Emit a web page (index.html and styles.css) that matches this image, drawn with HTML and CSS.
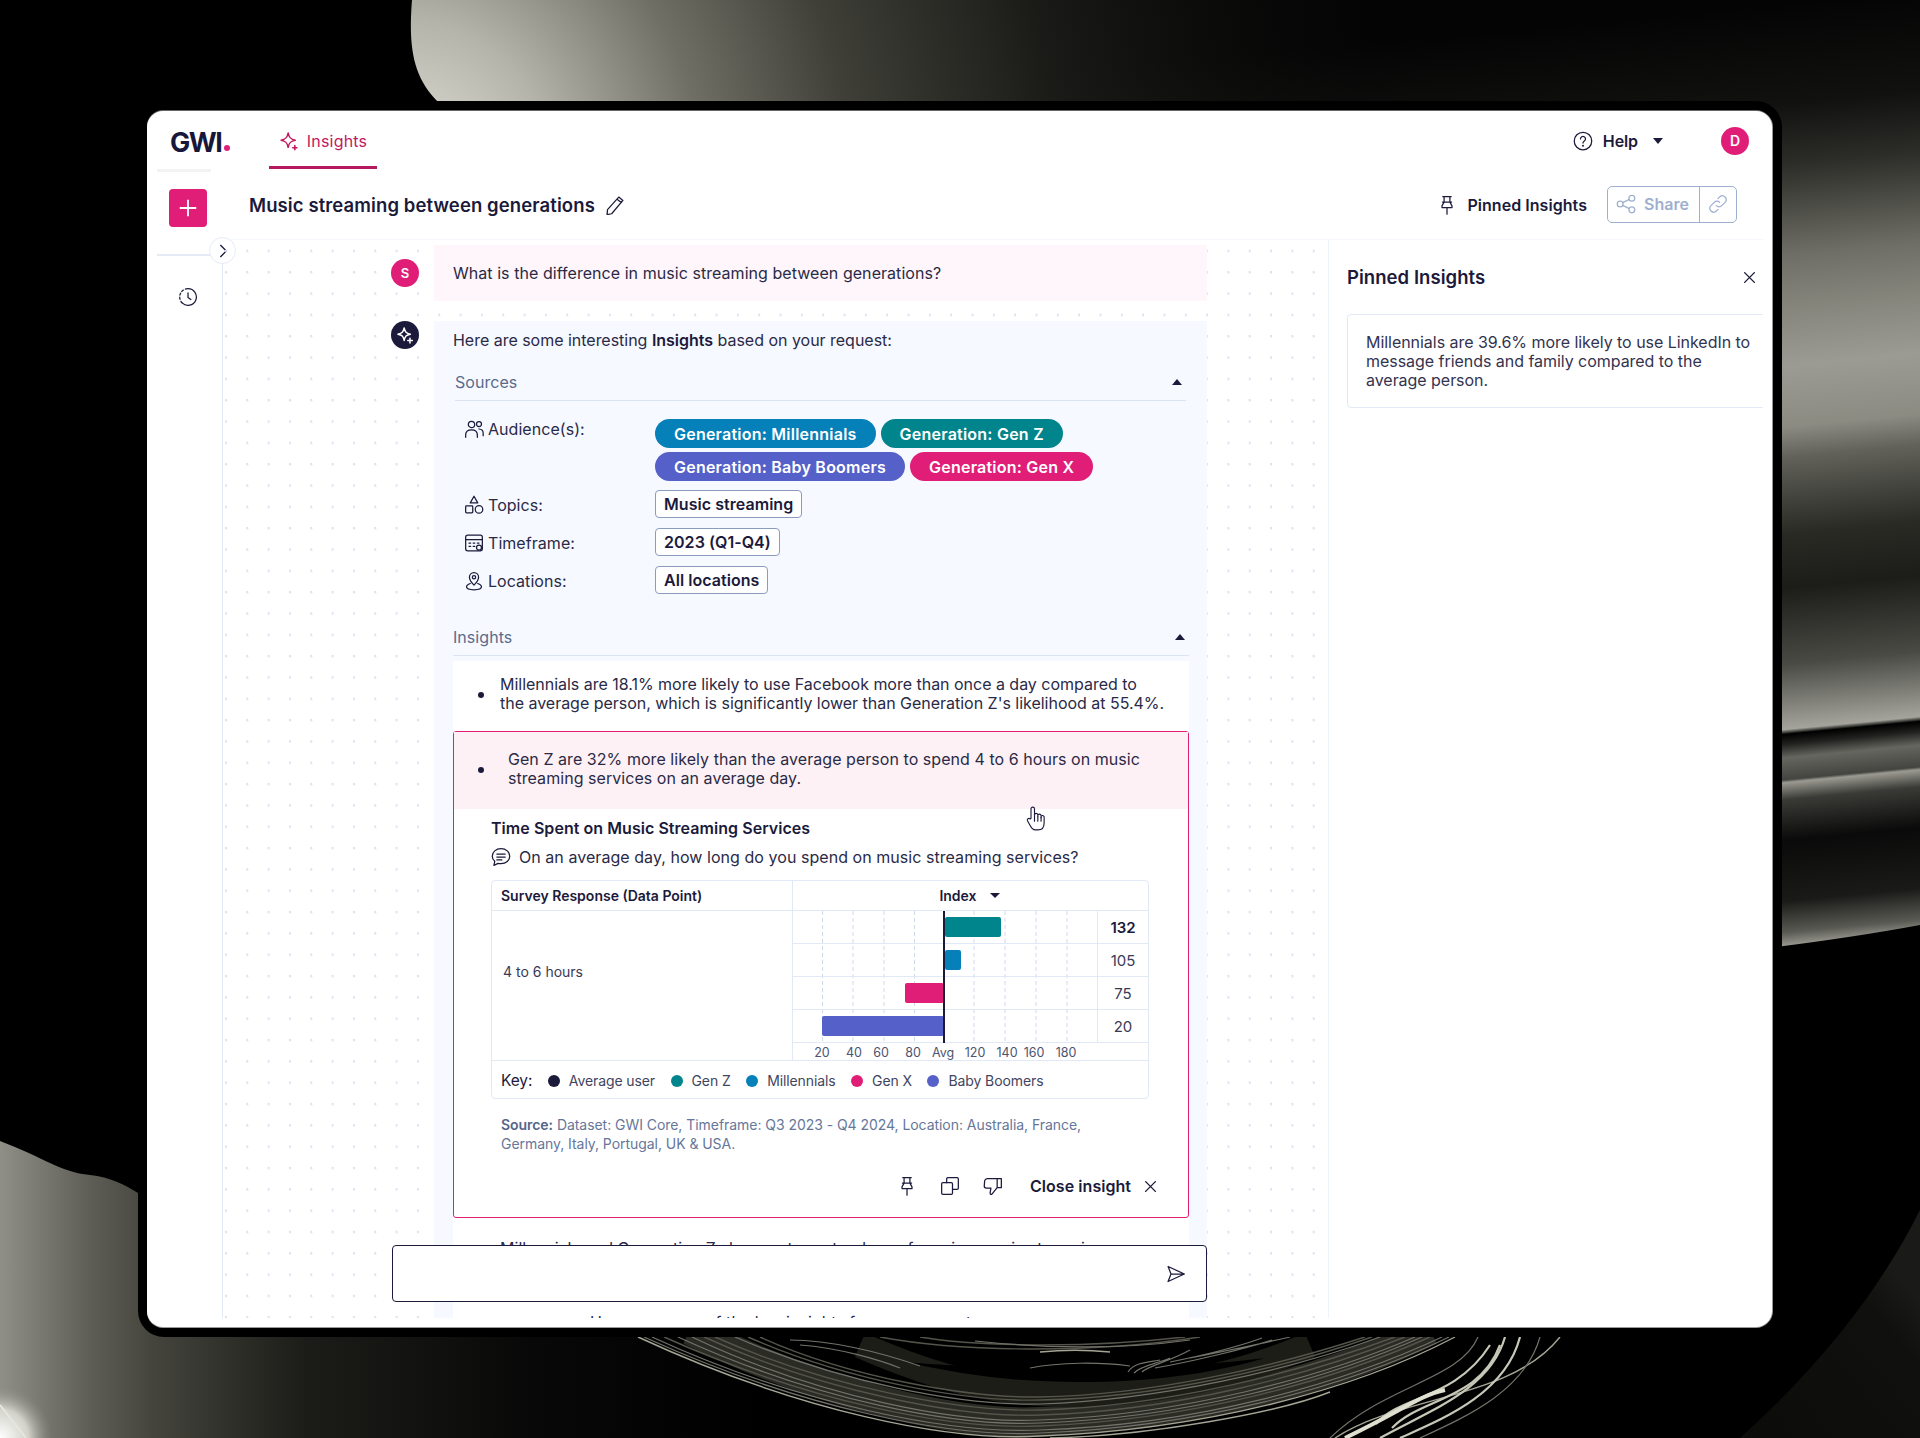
FILE: index.html
```html
<!DOCTYPE html>
<html lang="en">
<head>
<meta charset="utf-8">
<title>GWI Insights</title>
<link rel="stylesheet" href="styles.css">
</head>
<body>
<svg class="backdrop" viewBox="0 0 1920 1438" aria-hidden="true">
  <defs>
    <linearGradient id="rightBand" gradientUnits="userSpaceOnUse" x1="1815" y1="0" x2="1905" y2="940">
      <stop offset="0" stop-color="#040404"/><stop offset=".106" stop-color="#111110"/><stop offset=".17" stop-color="#2c2c28"/>
      <stop offset=".213" stop-color="#4a4a44"/><stop offset=".266" stop-color="#6e6e66"/><stop offset=".319" stop-color="#84847b"/>
      <stop offset=".383" stop-color="#9b9b93"/><stop offset=".447" stop-color="#8b8b82"/><stop offset=".479" stop-color="#62625b"/>
      <stop offset=".52" stop-color="#45453f"/><stop offset=".56" stop-color="#2a2a25"/><stop offset=".617" stop-color="#1c1c18"/>
      <stop offset=".697" stop-color="#4a4a45"/><stop offset=".766" stop-color="#a4a49c"/><stop offset=".771" stop-color="#000"/>
      <stop offset=".782" stop-color="#222220"/><stop offset=".796" stop-color="#666660"/><stop offset=".819" stop-color="#444440"/>
      <stop offset=".822" stop-color="#9a9a92"/><stop offset=".84" stop-color="#3a3a36"/><stop offset=".883" stop-color="#0a0a0a"/>
      <stop offset=".947" stop-color="#1a1a18"/><stop offset=".98" stop-color="#5a5a54"/><stop offset="1" stop-color="#b0b0a8"/>
    </linearGradient>
    <radialGradient id="topBlob" gradientUnits="userSpaceOnUse" cx="400" cy="170" r="1000">
      <stop offset="0" stop-color="#e4e4dc"/><stop offset=".15" stop-color="#b4b4aa"/><stop offset=".3" stop-color="#6f6f65"/>
      <stop offset=".45" stop-color="#3f3f38"/><stop offset=".65" stop-color="#1b1b18"/><stop offset="1" stop-color="#0a0a0a" stop-opacity="0"/>
    </radialGradient>
    <linearGradient id="leftFade" gradientUnits="userSpaceOnUse" x1="0" y1="0" x2="760" y2="0">
      <stop offset="0" stop-color="#8f8f87"/><stop offset=".12" stop-color="#5d5d55"/><stop offset=".2" stop-color="#45453e"/>
      <stop offset=".4" stop-color="#1c1c18"/><stop offset=".7" stop-color="#080808"/><stop offset="1" stop-color="#000"/>
    </linearGradient>
    <radialGradient id="leftGlow" gradientUnits="userSpaceOnUse" cx="0" cy="1438" r="52">
      <stop offset="0" stop-color="#fff"/><stop offset=".55" stop-color="#e0e0d8" stop-opacity=".85"/><stop offset="1" stop-color="#8f8f87" stop-opacity="0"/>
    </radialGradient>
    <linearGradient id="cornerFade" gradientUnits="userSpaceOnUse" x1="1760" y1="1438" x2="1920" y2="1300">
      <stop offset="0" stop-color="#0c0c0a"/><stop offset=".8" stop-color="#10100e"/><stop offset="1" stop-color="#1a1a18"/>
    </linearGradient>
  </defs>
  <rect class="bg-black" width="1920" height="1438"/>
  <path fill="url(#rightBand)" d="M412 0C408 50 414 78 438 102H1760V949Q1850 938 1920 925V0Z"/>
  <path fill="url(#topBlob)" d="M412 0C408 50 414 78 438 102H1782V0Z"/>
  <path fill="url(#leftFade)" d="M0 1141C45 1158 60 1172 90 1175C110 1177 125 1185 138 1193V1300H900V1438H0Z"/>
  <path fill="url(#leftGlow)" d="M0 1380H60V1438H0Z"/>
  <path class="s-w" d="M0 1405L26 1438"/>
  <path fill="url(#cornerFade)" d="M1740 1438Q1860 1330 1920 1210V1438Z"/>

  <path class="s-band" d="M690 1330C820 1395 960 1426 1040 1422C1180 1417 1320 1385 1430 1330"/>
  <path class="s-band2" d="M860 1345C940 1380 1000 1395 1080 1394C1160 1392 1240 1375 1310 1345"/>
  <path class="s-crescent" d="M905 1362C960 1374 1010 1382 1080 1382C1150 1382 1210 1374 1265 1358C1200 1366 1140 1368 1080 1368C1010 1368 950 1366 905 1362Z"/>
  <path class="s-1" d="M638 1337C800 1412 950 1442 1040 1436C1200 1430 1350 1392 1455 1337"/>
  <path class="s-2" d="M644 1337C800 1408 950 1438 1040 1433C1197 1427 1345 1388 1449 1337"/>
  <path class="s-2" d="M652 1337C800 1405 950 1434 1040 1430C1195 1425 1340 1385 1442 1337"/>
  <path class="s-3" d="M664 1337C810 1402 950 1430 1040 1426C1190 1420 1330 1382 1430 1337"/>
  <path class="s-2" d="M678 1337C815 1400 955 1427 1040 1423C1185 1418 1325 1380 1422 1337"/>
  <path class="s-2" d="M692 1337C820 1398 960 1424 1040 1420C1180 1415 1320 1378 1415 1337"/>
  <path class="s-3" d="M704 1337C825 1392 960 1418 1040 1415C1175 1411 1310 1375 1405 1337"/>
  <path class="s-3" d="M715 1337C830 1388 960 1412 1040 1410C1170 1406 1300 1372 1395 1337"/>
  <path class="s-2" d="M735 1337C840 1382 960 1406 1040 1404C1160 1400 1290 1370 1380 1337"/>
  <path class="s-3" d="M748 1337C845 1380 965 1402 1040 1400C1155 1398 1280 1369 1372 1337"/>
  <path class="s-3" d="M760 1337C850 1378 970 1398 1040 1397C1150 1395 1270 1368 1365 1337"/>
  <path class="s-2" d="M800 1345C840 1348 880 1360 900 1368"/>
  <path class="s-2" d="M790 1340C830 1340 880 1352 920 1366"/>
  <path class="s-3" d="M880 1337C960 1352 1090 1354 1200 1337"/>
  <path class="s-3" d="M920 1337C980 1347 1090 1348 1185 1337"/>
  <path class="s-2" d="M975 1341C1040 1348 1120 1350 1190 1340"/>
  <path class="s-1" d="M1040 1352C1060 1350 1090 1350 1110 1352"/>
  <path class="s-2" d="M1030 1368C1060 1362 1100 1362 1130 1366"/>
  <path class="s-2" d="M1128 1372C1134 1362 1150 1362 1160 1360M1134 1373C1140 1366 1156 1364 1170 1358M1142 1372C1148 1366 1168 1362 1190 1350"/>
  <path class="s-2" d="M1155 1368C1190 1362 1240 1350 1272 1340M1170 1362C1200 1356 1240 1346 1262 1338M1190 1358C1220 1352 1260 1344 1290 1337"/>
  <path class="s-1" d="M1335 1438C1400 1395 1510 1400 1560 1337"/>
  <path class="s-l" d="M1380 1438C1430 1410 1490 1390 1505 1337"/>
  <path class="s-l" d="M1400 1438C1440 1420 1505 1395 1520 1337"/>
  <path class="s-l" d="M1376 1424C1400 1395 1455 1400 1490 1345M1392 1428C1420 1398 1480 1400 1500 1345"/>
  <path class="s-2" d="M1330 1438C1385 1385 1460 1380 1478 1337"/>
  <path class="s-2" d="M1420 1438C1470 1415 1525 1390 1540 1337"/>
  <path class="s-w2" d="M1345 1438C1400 1412 1420 1395 1445 1390"/>
  <path class="s-1" d="M1050 1438C1150 1436 1280 1412 1330 1392"/>
</svg>

<div class="frame">
  <div class="app">
    <header class="topbar">
      <div class="logo">GWI<span class="logo-dot"></span></div>
      <a class="tab">
        <svg class="ic-20 tab-ic" viewBox="0 0 24 24"><path class="st" d="M11 2.500C12 8 14 10 19.500 11 14 12 12 14 11 19.500 10 14 8 12 2.500 11 8 10 10 8 11 2.500Z"/><path class="st" d="M19 17.500v5M16.500 20h5"/></svg>
        <span>Insights</span>
      </a>
      <div class="top-right">
        <button class="help">
          <svg class="ic-20 dark" viewBox="0 0 24 24"><circle class="st" cx="12" cy="12" r="10.500"/><path class="st" d="M9 9.500a3 3 0 1 1 4.600 2.500c-1 .7-1.600 1.200-1.600 2.500"/><circle class="fl" cx="12" cy="17.700" r="1.200"/></svg>
          <span>Help</span>
          <i class="caret-down"></i>
        </button>
        <div class="avatar pink big">D</div>
      </div>
    </header>

    <div class="workspace">
      <aside class="sidebar">
        <button class="new-btn"><svg viewBox="0 0 24 24"><path d="M12 3v18M3 12h18"/></svg></button>
        <div class="side-rule"></div>
        <svg class="history" viewBox="0 0 24 24"><path class="st" d="M12 2a10 10 0 1 1-7 17.100"/><path class="st dash2" d="M5 19.100A10 10 0 0 1 12 2"/><path class="st" d="M12 7v5.500l3.500 2.500"/></svg>
        <button class="toggle"><svg viewBox="0 0 24 24"><path d="M8 3l9 9-9 9"/></svg></button>
      </aside>

      <main class="main">
        <div class="titlebar">
          <div class="title-left">
            <h1>Music streaming between generations</h1>
            <svg class="ic-20 dark" viewBox="0 0 24 24"><path class="st" d="M16.500 2.500l5 4L8 22.500l-5.500 1 .5-6z M14.500 5l5 4"/></svg>
          </div>
          <div class="title-right">
            <button class="pinned-btn">
              <svg class="ic-20 dark" viewBox="0 0 24 24"><path class="st" d="M7 2h10M8.500 2v6.500L6 13v2h12v-2l-2.500-4.500V2M6.500 8.500h11M12 15v8"/></svg>
              <span>Pinned Insights</span>
            </button>
            <div class="share-group">
              <span class="share-main">
                <svg class="ic-20" viewBox="0 0 24 24"><circle class="st" cx="5" cy="12" r="3.500"/><circle class="st" cx="19" cy="5" r="3.500"/><circle class="st" cx="19" cy="19" r="3.500"/><path class="st" d="M8 10.300L16 6.500M8 13.700l8 3.800"/></svg>
                Share
              </span>
              <span class="share-link">
                <svg class="ic-20" viewBox="0 0 24 24"><path class="st" d="M10 14a4.500 4.500 0 0 0 6.500 0l4-4A4.600 4.600 0 0 0 14 3.500l-2 2"/><path class="st" d="M14 10a4.500 4.500 0 0 0-6.500 0l-4 4a4.600 4.600 0 0 0 6.500 6.500l2-2"/></svg>
              </span>
            </div>
          </div>
        </div>

        <div class="panes">
          <section class="chat">
            <div class="msg user-msg">
              <div class="avatar pink">S</div>
              <div class="bubble bubble-user">What is the difference in music streaming between generations?</div>
            </div>
            <div class="msg">
              <div class="avatar navy">
                <svg viewBox="0 0 24 24"><path d="M11 3.500C12 8.500 13.500 10 18.500 11 13.500 12 12 13.500 11 18.500 10 13.500 8.500 12 3.500 11 8.500 10 10 8.500 11 3.500Z"/><path d="M18 16v5.500M15.300 18.700h5.500"/></svg>
              </div>
              <div class="bubble bubble-bot">
                <p class="intro">Here are some interesting <b>Insights</b> based on your request:</p>

                <div class="section-head sources-head"><span>Sources</span><i class="caret-up"></i></div>
                <div class="sources">
                  <div class="src-row">
                    <div class="src-label">
                      <svg class="ic-20 dark" viewBox="0 0 24 24"><circle class="st" cx="9" cy="6.500" r="3.800"/><path class="st" d="M2 22v-3c0-4 3-6 7-6s7 2 7 6v3"/><circle class="st" cx="18" cy="6" r="3"/><path class="st" d="M18 12c3 .2 5 2.200 5 5v3"/></svg>
                      <span>Audience(s):</span>
                    </div>
                    <div class="chips">
                      <span class="chip c-blue">Generation: Millennials</span>
                      <span class="chip c-teal">Generation: Gen Z</span>
                      <span class="chip c-indigo">Generation: Baby Boomers</span>
                      <span class="chip c-pink">Generation: Gen X</span>
                    </div>
                  </div>
                  <div class="src-row">
                    <div class="src-label">
                      <svg class="ic-20 dark" viewBox="0 0 24 24"><path class="st" d="M12 1.500l4.500 8h-9z"/><rect class="st" x="2" y="13" width="8.500" height="8.500" rx="1"/><circle class="st" cx="18" cy="17.300" r="4.500"/></svg>
                      <span>Topics:</span>
                    </div>
                    <span class="tag">Music streaming</span>
                  </div>
                  <div class="src-row">
                    <div class="src-label">
                      <svg class="ic-20 dark" viewBox="0 0 24 24"><rect class="st" x="2" y="2.500" width="20" height="19" rx="2.500"/><path class="st" d="M2 8h20M6 12h2M11 12h2M16 12h2M6 16h2M11 16h2"/><circle class="st" cx="18" cy="17.500" r="3"/></svg>
                      <span>Timeframe:</span>
                    </div>
                    <span class="tag">2023 (Q1-Q4)</span>
                  </div>
                  <div class="src-row">
                    <div class="src-label">
                      <svg class="ic-20 dark" viewBox="0 0 24 24"><path class="st" d="M12 17c-3-3-5.500-6-5.500-9.500a5.500 5.500 0 0 1 11 0C17.500 11 15 14 12 17z"/><circle class="st" cx="12" cy="7.500" r="2"/><path class="st" d="M7.500 15C4.500 16 3 17.500 3 19c0 2.500 4 3.500 9 3.500s9-1 9-3.500c0-1.500-1.500-3-4.500-4"/></svg>
                      <span>Locations:</span>
                    </div>
                    <span class="tag">All locations</span>
                  </div>
                </div>

                <div class="section-head insights-head"><span>Insights</span><i class="caret-up"></i></div>

                <div class="insight-list">
                  <div class="insight-plain">
                    <i class="bullet"></i>
                    <p>Millennials are 18.1% more likely to use Facebook more than once a day compared to<br>the average person, which is significantly lower than Generation Z's likelihood at 55.4%.</p>
                  </div>

                  <article class="insight-open">
                    <div class="open-head">
                      <i class="bullet"></i>
                      <p>Gen Z are 32% more likely than the average person to spend 4 to 6 hours on music streaming services on an average day.</p>
                    </div>
                    <svg class="hand" viewBox="0 0 24 30"><path d="M8 15V4a2 2 0 0 1 4 0v9l0-2.500a2 2 0 0 1 3.800 0V13l0-1.500a1.900 1.900 0 0 1 3.700 0V14l0-1a1.800 1.800 0 0 1 3.500 0v7c0 4-2 8-7 8h-3c-3 0-4.500-2-6-5l-3-5.500c-1-2 1.500-3.500 3-2z"/><path d="M12 13v5M15.800 13v5M19.500 14v4"/></svg>
                    <div class="open-body">
                      <h3>Time Spent on Music Streaming Services</h3>
                      <div class="question">
                        <svg class="ic-20 dark" viewBox="0 0 24 24"><path class="st" d="M12 2C6 2 1.500 6 1.500 11c0 2.500 1 4.500 3 6.200L3.500 22l5-2.300c1 .2 2.300.3 3.500.3 6 0 10.500-4 10.500-9S18 2 12 2z"/><path class="st" d="M7 8.500h10M7 12h10M7 15.500h6"/></svg>
                        <span>On an average day, how long do you spend on music streaming services?</span>
                      </div>

                      <div class="tbl">
                        <div class="tbl-head">
                          <div class="th-left">Survey Response (Data Point)</div>
                          <div class="th-right"><span>Index</span><i class="caret-down small"></i></div>
                        </div>
                        <div class="tbl-body">
                          <div class="resp">4 to 6 hours</div>
                          <div class="chart">
                            <svg class="gridlines" viewBox="0 0 305 132" aria-hidden="true">
                              <path d="M29.500 0V132M60 0V132M91 0V132M121.500 0V132M181 0V132M212 0V132M243 0V132M274 0V132"/>
                            </svg>
                            <div class="row"><div class="plot"><i class="bar b-teal" style="left:152px;width:56px"></i></div><div class="val strong">132</div></div>
                            <div class="row"><div class="plot"><i class="bar b-blue" style="left:152px;width:16px"></i></div><div class="val">105</div></div>
                            <div class="row"><div class="plot"><i class="bar b-pink" style="left:112px;width:39px"></i></div><div class="val">75</div></div>
                            <div class="row"><div class="plot"><i class="bar b-indigo" style="left:29px;width:122px"></i></div><div class="val">20</div></div>
                            <i class="avg-line"></i>
                            <div class="axis">
                              <span style="left:29px">20</span><span style="left:61px">40</span><span style="left:88px">60</span><span style="left:120px">80</span><span style="left:150px">Avg</span><span style="left:182px">120</span><span style="left:214px">140</span><span style="left:241px">160</span><span style="left:273px">180</span>
                            </div>
                          </div>
                        </div>
                        <div class="key">
                          <span class="key-title">Key:</span>
                          <span class="key-item"><i class="dot d-navy"></i>Average user</span>
                          <span class="key-item"><i class="dot d-teal"></i>Gen Z</span>
                          <span class="key-item"><i class="dot d-blue"></i>Millennials</span>
                          <span class="key-item"><i class="dot d-pink"></i>Gen X</span>
                          <span class="key-item"><i class="dot d-indigo"></i>Baby Boomers</span>
                        </div>
                      </div>

                      <p class="source"><b>Source:</b> Dataset: GWI Core, Timeframe: Q3 2023 - Q4 2024, Location: Australia, France, Germany, Italy, Portugal, UK &amp; USA.</p>

                      <div class="actions">
                        <svg class="ic-20 dark" viewBox="0 0 24 24"><path class="st" d="M7 2h10M8.500 2v6.500L6 13v2h12v-2l-2.500-4.500V2M6.500 8.500h11M12 15v8"/></svg>
                        <svg class="ic-20 dark" viewBox="0 0 24 24"><rect class="st" x="2" y="8" width="13" height="14" rx="1.500"/><path class="st" d="M8 8V3.500C8 2.700 8.700 2 9.500 2h11c.8 0 1.500.7 1.500 1.500v11c0 .8-.7 1.500-1.500 1.500H15"/></svg>
                        <svg class="ic-20 dark" viewBox="0 0 24 24"><path class="st" d="M17 3H5C3.500 3 2.500 4 2 5.500L1.500 12c0 1.500 1 2.500 2.500 2.500h5.500l-1 6c0 1 .7 2 2 1.500l6.500-8V3zM17 3h5v11h-5"/></svg>
                        <span class="close-insight">Close insight</span>
                        <svg class="ic-x dark" viewBox="0 0 24 24"><path class="st" d="M3 3l18 18M21 3L3 21"/></svg>
                      </div>
                    </div>
                  </article>

                  <div class="insight-next">
                    <p>Millennials and Generation Z show a strong tendency for using music streaming services more frequently compared to the older generations in the audience.</p>
                    <p class="next-tail">Here are some of the key insights for your request</p>
                  </div>
                </div>
              </div>
            </div>

            <div class="composer">
              <svg class="send" viewBox="0 0 24 24"><path class="st" d="M2.500 3L22 12 2.500 21 6 12zM6 12h16"/></svg>
            </div>
          </section>

          <aside class="pinned">
            <div class="pinned-head">
              <h2>Pinned Insights</h2>
              <svg class="ic-x dark" viewBox="0 0 24 24"><path class="st" d="M3 3l18 18M21 3L3 21"/></svg>
            </div>
            <div class="pinned-card">
              <p>Millennials are 39.6% more likely to use LinkedIn to message friends and family compared to the average person.</p>
            </div>
          </aside>
        </div>
      </main>
    </div>
  </div>
</div>
</body>
</html>
```
FILE: styles.css
```css
* { box-sizing: border-box; }
html, body { margin: 0; padding: 0; }
body {
  width: 1920px;
  height: 1438px;
  position: relative;
  overflow: hidden;
  background: #000;
  font-family: "Inter", "Noto Sans", sans-serif;
  color: #2a2a47;
  font-size: 16px;
  letter-spacing: 0.05px;
}
p, h1, h2, h3 { margin: 0; }
button { font: inherit; color: inherit; background: none; border: 0; padding: 0; letter-spacing: inherit; }
i { display: block; }

/* backdrop */
.backdrop { position: absolute; left: 0; top: 0; width: 1920px; height: 1438px; }
.bg-black { fill: #000; }
.backdrop path[class^="s-"] { fill: none; }
.backdrop path.s-crescent { fill: #000; }
.s-band { stroke: #2b2b25; stroke-width: 30; }
.s-band2 { stroke: #1d1d18; stroke-width: 26; }
.s-1 { stroke: #a5a595; stroke-width: 1.4; }
.s-2 { stroke: #72726a; stroke-width: 1.2; }
.s-3 { stroke: #54544a; stroke-width: 1.4; }
.s-l { stroke: #c8c8b8; stroke-width: 2.2; }
.s-w { stroke: #e6e6de; stroke-width: 2; }
.s-w2 { stroke: #e0e0d0; stroke-width: 4; }

/* frame */
.frame {
  position: relative;
  width: 1644px;
  height: 1236px;
  margin: 101px 0 0 138px;
  padding: 10px 10px 10px 9px;
  background: #000;
  border-radius: 26px;
}
.app {
  width: 100%;
  height: 100%;
  background: #fff;
  border-radius: 16px;
  box-shadow: 0 1px 0 #999, 1px 0 0 #999, 0 -1px 0 #666;
  display: flex;
  flex-direction: column;
  overflow: hidden;
}

/* icons */
svg { display: block; flex: none; }
.st { fill: none; stroke: currentColor; stroke-width: 1.500; stroke-linecap: round; stroke-linejoin: round; }
.fl { fill: currentColor; }
.ic-20 { width: 20px; height: 20px; }
.tab-ic .st { stroke-width: 1.900; }
.ic-x { width: 13px; height: 13px; }
.ic-x .st { stroke-width: 2.600; }
.dark { color: #1b1a3b; }

/* top bar */
.topbar {
  height: 58px;
  flex: none;
  display: flex;
  align-items: stretch;
  padding: 0 23px;
}
.logo {
  position: relative;
  display: flex;
  align-items: flex-end;
  width: 99px;
  height: 47px;
  font-size: 27px;
  line-height: 30px;
  font-weight: 700;
  letter-spacing: -1.500px;
  color: #17173a;
}
.logo::after {
  content: "";
  position: absolute;
  left: -13px;
  top: 58px;
  width: 54px;
  height: 3px;
  background: #f3f3f3;
}
.logo-dot { width: 6px; height: 6px; margin: 0 0 7px 3px; border-radius: 50%; background: #e01e78; }
.tab {
  width: 108px;
  height: 58px;
  display: flex;
  align-items: center;
  justify-content: center;
  gap: 8px;
  padding-top: 5px;
  color: #c2185f;
  font-size: 16px;
  letter-spacing: 0.2px;
  border-bottom: 3px solid #b5195f;
}
.top-right { margin-left: auto; display: flex; align-items: center; padding-top: 1px; }
.help { display: flex; align-items: center; font-weight: 600; font-size: 16px; letter-spacing: -0.1px; color: #1b1a3b; }
.help span { margin-left: 10px; }
.help .caret-down { margin-left: 15px; }
.caret-down { width: 0; height: 0; border: 5.500px solid transparent; border-bottom: 0; border-top: 6px solid #1b1a3b; }
.caret-down.small { border-width: 5px 5px 0; }
.caret-up { width: 0; height: 0; border: 5px solid transparent; border-top: 0; border-bottom: 6px solid #1b1a3b; }
.avatar {
  width: 28px;
  height: 28px;
  border-radius: 50%;
  display: flex;
  align-items: center;
  justify-content: center;
  flex: none;
  color: #fff;
  font-size: 13px;
  font-weight: 600;
}
.avatar.big { margin-left: 58px; font-size: 14px; }
.pink { background: #e01e78; }
.navy { background: #1b1a3b; }
.navy svg { width: 20px; height: 20px; }
.navy path { fill: none; stroke: #fff; stroke-width: 1.800; stroke-linecap: round; stroke-linejoin: round; }

/* workspace */
.workspace { flex: 1; min-height: 0; display: flex; padding-bottom: 9px; }
.sidebar {
  position: relative;
  width: 76px;
  flex: none;
  padding: 0 0 0 10px;
  border-right: 1px solid #e4eaf6;
  margin-top: 71px;
}
.new-btn {
  display: flex;
  align-items: center;
  justify-content: center;
  width: 38px;
  height: 38px;
  margin: -51px 0 0 12px;
  background: #e01e78;
  border-radius: 4px;
}
.new-btn svg { width: 22px; height: 22px; }
.new-btn path { fill: none; stroke: #fff; stroke-width: 2; }
.side-rule { height: 2px; margin-top: 27px; background: #e4eaf6; margin-right: -2px; }
.history { width: 20px; height: 20px; margin: 31px 0 0 21px; color: #1b1a3b; }
.history .dash2 { stroke-dasharray: 2.500 2.500; }
.toggle {
  position: absolute;
  right: -14px;
  top: -3px;
  width: 27px;
  height: 27px;
  border-radius: 50%;
  background: #fff;
  border: 1px solid #e4eaf6;
  display: flex;
  align-items: center;
  justify-content: center;
}
.toggle svg { width: 16px; height: 16px; }
.toggle path { fill: none; stroke: #1b1a3b; stroke-width: 2; }

.main { flex: 1; min-width: 0; display: flex; flex-direction: column; margin-right: 9px; }
.titlebar {
  height: 71px;
  flex: none;
  display: flex;
  align-items: center;
  justify-content: space-between;
  padding: 0 26px;
  border-bottom: 1px solid #f4f7fb;
}
.title-left { display: flex; align-items: center; gap: 10px; padding-top: 2px; }
h1 { font-size: 18.500px; font-weight: 600; letter-spacing: 0.100px; color: #1b1a3b; }
.title-right { display: flex; align-items: center; }
.pinned-btn { display: flex; align-items: center; gap: 10px; font-weight: 600; font-size: 16px; margin-right: 20px; color: #1b1a3b; padding-top: 1px; }
.share-group {
  display: flex;
  height: 37px;
  border: 1.500px solid #9fb0cf;
  border-radius: 5px;
  color: #9fb0cf;
  font-weight: 600;
  font-size: 16px;
}
.share-main { width: 92px; display: flex; align-items: center; gap: 8px; padding-left: 8px; border-right: 1.500px solid #9fb0cf; }
.share-link { width: 36px; display: flex; align-items: center; justify-content: center; }

.panes { flex: 1; min-height: 0; display: flex; }
.chat {
  position: relative;
  width: 1105px;
  flex: none;
  padding: 5px 0 0 168px;
  overflow: hidden;
  background-image: radial-gradient(circle at 3px 11px, #dbe3f2 0, #dbe3f2 1px, transparent 1.500px);
  background-size: 21.330px 21.330px;
}
.msg { display: flex; gap: 15px; }
.msg > .avatar { margin-top: 0; }
.user-msg { margin-bottom: 20px; }
.user-msg .avatar { margin-top: 14px; }
.bubble { width: 773px; padding-left: 19px; }
.bubble-user { height: 56px; background: #fef6fa; display: flex; align-items: center; line-height: 19px; }
.bubble-bot { background: #f6f9ff; padding: 10px 19px 0; }
.intro { line-height: 19px; letter-spacing: -0.02px; }
.intro b { font-weight: 600; color: #1b1a3b; }
.section-head {
  display: flex;
  justify-content: space-between;
  align-items: center;
  color: #5a6b8c;
  line-height: 20px;
  border-bottom: 1.500px solid #d9e3f2;
  padding-bottom: 8px;
}
.sources-head { margin: 22px 2px 0 2px; padding-right: 4px; }
.insights-head { margin-top: 33px; padding-right: 4px; margin-right: -1px; }
.sources { padding: 18px 0 0 11px; }
.src-row { display: flex; margin-bottom: 10px; align-items: center; }
.src-row .src-label { padding-top: 1px; }
.src-row:first-child { align-items: flex-start; margin-bottom: 9px; }
.src-row:first-child .src-label { padding-top: 0; }
.src-label { width: 191px; flex: none; display: flex; align-items: center; gap: 4px; line-height: 20px; }
.chips { display: flex; flex-wrap: wrap; gap: 4px 5px; width: 500px; }
.chip {
  height: 29px;
  padding: 0 19px;
  display: flex;
  align-items: center;
  border-radius: 15px;
  color: #fff;
  font-weight: 600;
  font-size: 16px;
  letter-spacing: 0.23px;
}
.c-blue { background: #0580b9; }
.c-teal { background: #00858c; }
.c-indigo { background: #5560c9; }
.c-pink { background: #e01e78; }
.tag {
  height: 28px;
  padding: 0 8px;
  display: flex;
  align-items: center;
  background: #fff;
  border: 1.500px solid #8c9cbd;
  border-radius: 4px;
  font-weight: 600;
  color: #1b1a3b;
}

.insight-list { margin: 5px -1px 0 0; background: #fff; padding-top: 14px; }
.insight-plain { position: relative; padding: 0 10px 12px 47px; line-height: 19px; margin-bottom: 6px; letter-spacing: -0.02px; }
.bullet { position: absolute; left: 25px; width: 6px; height: 6px; border-radius: 50%; background: #1b1a3b; }
.insight-plain .bullet { top: 17px; }
.insight-open { position: relative; border: 1.500px solid #e01e78; border-radius: 3px; height: 487px; }
.open-head { position: relative; height: 77px; background: #fdf1f5; padding: 18px 40px 0 54px; line-height: 19px; }
.open-head .bullet { top: 35px; left: 24px; }
.hand { position: absolute; left: 570px; top: 73px; width: 21px; height: 27px; }
.hand path { fill: #fff; stroke: #1b1a3b; stroke-width: 1.300; stroke-linejoin: round; stroke-linecap: round; }
.open-body { padding: 9px 30px 0 37px; }
h3 { font-size: 16px; font-weight: 600; line-height: 20px; color: #1b1a3b; }
.question { display: flex; align-items: center; gap: 8px; margin-top: 9px; line-height: 20px; }

.tbl {
  width: 658px;
  height: 219px;
  margin-top: 13px;
  border: 1px solid #e2e9f6;
  border-radius: 4px;
  font-size: 14px;
  letter-spacing: 0;
  display: flex;
  flex-direction: column;
}
.tbl-head { height: 30px; flex: none; display: flex; border-bottom: 1px solid #e2e9f6; font-weight: 600; color: #1b1a3b; }
.th-left { width: 301px; padding-left: 9px; display: flex; align-items: center; border-right: 1px solid #e2e9f6; }
.th-right { flex: 1; display: flex; align-items: center; justify-content: center; gap: 13px; padding-right: 2px; }
.tbl-body { flex: 1; min-height: 0; display: flex; border-bottom: 1px solid #e2e9f6; }
.resp { width: 301px; padding-left: 11px; display: flex; align-items: center; border-right: 1px solid #e2e9f6; color: #3a3a55; padding-bottom: 29px; }
.chart { position: relative; flex: 1; }
.gridlines { position: absolute; left: 0; top: 0; width: 305px; height: 132px; }
.gridlines path { fill: none; stroke: #cfd9ec; stroke-dasharray: 4 3; }
.row { display: flex; height: 33px; border-bottom: 1px solid #e2e9f6; position: relative; }
.plot { position: relative; width: 305px; border-right: 1px solid #e2e9f6; }
.bar { position: absolute; top: 6px; height: 20px; border-radius: 2px; }
.b-teal { background: #00858c; }
.b-blue { background: #0580b9; }
.b-pink { background: #e01e78; }
.b-indigo { background: #5560c9; }
.val { flex: 1; display: flex; align-items: center; justify-content: center; font-size: 15px; color: #3a3a55; }
.val.strong { font-weight: 600; color: #1b1a3b; }
.avg-line { position: absolute; left: 150px; top: 0; width: 2px; height: 132px; background: #1b1a3b; }
.axis { position: relative; height: 19px; }
.axis span { position: absolute; top: 2px; transform: translateX(-50%); font-size: 12.500px; color: #4c5470; line-height: 16px; }
.key { height: 37px; flex: none; display: flex; align-items: center; gap: 15.500px; padding: 2px 0 0 9px; color: #3f4560; font-size: 14px; letter-spacing: -0.1px; }
.key-title { font-size: 15.500px; color: #1b1a3b; }
.key-item { display: flex; align-items: center; gap: 9px; }
.dot { width: 12px; height: 12px; border-radius: 50%; }
.d-navy { background: #1b1a3b; }
.d-teal { background: #00858c; }
.d-blue { background: #0580b9; }
.d-pink { background: #e01e78; }
.d-indigo { background: #5560c9; }

.source { margin: 16px 0 0 10px; width: 600px; font-size: 14px; line-height: 19px; letter-spacing: -0.05px; color: #66779a; }
.source b { font-weight: 600; color: #55658a; }
.actions { display: flex; align-items: center; margin-top: 23px; padding-left: 406px; }
.actions svg:nth-child(2) { margin-left: 23px; }
.actions svg:nth-child(3) { margin-left: 23px; }
.close-insight { font-weight: 600; margin-left: 27px; color: #1b1a3b; }
.actions .ic-x { margin-left: 13px; }

.insight-next { padding: 21px 56px 0 47px; line-height: 19px; }
.next-tail { margin-top: 36px; padding-left: 90px; white-space: nowrap; }

.composer {
  position: absolute;
  left: 169px;
  bottom: 16px;
  width: 815px;
  height: 57px;
  background: #fff;
  border: 1.500px solid #1b1a3b;
  border-radius: 4px;
  display: flex;
  align-items: center;
  justify-content: flex-end;
  padding-right: 20px;
  color: #1b1a3b;
}
.send { width: 20px; height: 20px; }

.pinned { flex: 1; min-width: 0; border-left: 1px solid #eef2f9; padding: 25px 0 0 18px; overflow: hidden; }
.pinned-head { display: flex; align-items: center; justify-content: space-between; padding-right: 7px; height: 24px; }
h2 { font-size: 18.500px; font-weight: 600; color: #1b1a3b; }
.pinned-card {
  width: 440px;
  height: 94px;
  margin-top: 25px;
  border: 1px solid #e2e9f6;
  border-radius: 4px;
  padding: 18px 0 0 18px;
  line-height: 19px;
  color: #33334f;
}
.pinned-card p { width: 392px; letter-spacing: -0.04px; }
```
